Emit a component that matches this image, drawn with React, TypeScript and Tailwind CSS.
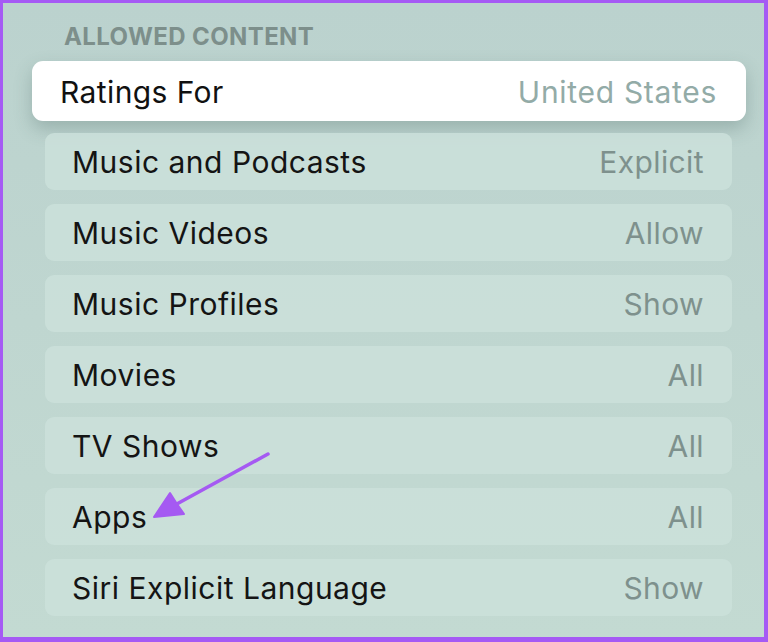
import React from "react";

const rows: { label: string; value: string }[] = [
  { label: "Music and Podcasts", value: "Explicit" },
  { label: "Music Videos", value: "Allow" },
  { label: "Music Profiles", value: "Show" },
  { label: "Movies", value: "All" },
  { label: "TV Shows", value: "All" },
  { label: "Apps", value: "All" },
  { label: "Siri Explicit Language", value: "Show" },
];

function Arrow() {
  return (
    <svg
      className="pointer-events-none absolute left-0 top-0"
      width="768"
      height="642"
      viewBox="0 0 768 642"
    >
      <line x1="265" y1="451" x2="172" y2="502" stroke="#a55af2" strokeWidth="3.5" strokeLinecap="round" />
      <path d="M151 514 L167 490 L174 501 L181 511 Z" fill="#a55af2" stroke="#a55af2" strokeWidth="2" strokeLinejoin="round" />
    </svg>
  );
}

export default function App() {
  return (
    <div
      className="relative w-[768px] h-[642px] overflow-hidden border-t-[3px] border-l-[3px] border-r-[4px] border-b-[5px] border-[#a55af4] bg-gradient-to-b from-[#bbd2ce] to-[#c3dad2]"
      style={{ fontFamily: "Inter, 'Noto Sans', sans-serif" }}
    >
      <div className="pl-[42px] pr-[32px] pt-[19px]">
        {/* Section header */}
        <h3 className="ml-[19px] text-[24px] leading-[29px] font-bold tracking-[0.4px] text-[#7d8f8b]">
          ALLOWED CONTENT
        </h3>

        {/* Focused row */}
        <div className="-ml-[13px] -mr-[14px] mt-[10px] h-[60px] rounded-[11px] bg-white pl-[28px] pr-[29px] pt-[3px] flex items-center justify-between shadow-[0_8px_18px_rgba(60,90,85,0.28)]">
          <span className="text-[30px] tracking-[0.4px] text-[#111]">Ratings For</span>
          <span className="text-[30px] tracking-[0.7px] text-[#93aba7]">United States</span>
        </div>

        {/* Settings rows */}
        <div className="mt-[12px] flex flex-col gap-[14px]">
          {rows.map((row) => (
            <div
              key={row.label}
              className="h-[57px] rounded-[9px] bg-[#cbe1db]/85 pl-[27px] pr-[28px] pt-[2px] flex items-center justify-between"
            >
              <span className="text-[30px] tracking-[0.5px] text-[#141414]">{row.label}</span>
              <span className="text-[30px] tracking-[0.4px] text-[#7e918d]">{row.value}</span>
            </div>
          ))}
        </div>
      </div>

      <Arrow />
    </div>
  );
}
